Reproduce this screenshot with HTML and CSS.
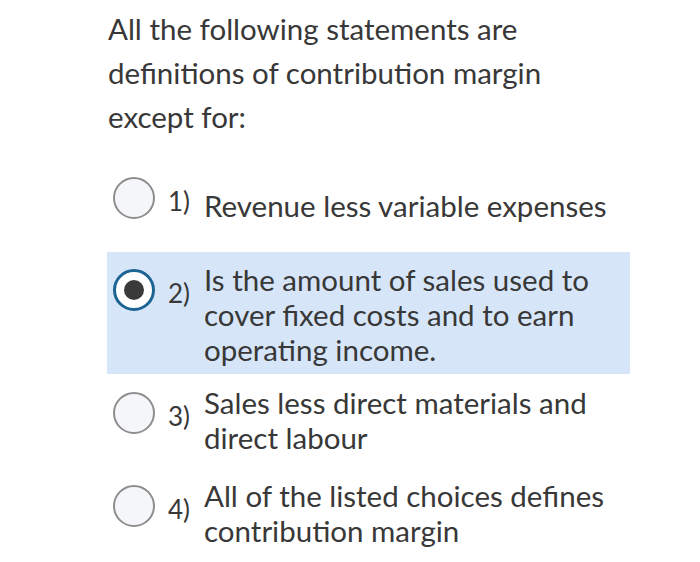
FILE: index.html
```html
<!DOCTYPE html>
<html lang="en">
<head>
<meta charset="utf-8">
<title>Question</title>
<link rel="stylesheet" href="styles.css">
</head>
<body>
<div class="page">
  <p class="question">All the following statements are definitions of contribution margin except for:</p>
  <div class="options">
    <div class="option option--first option--single">
      <span class="radio"></span>
      <span class="num">1)</span>
      <span class="text">Revenue less variable expenses</span>
    </div>
    <div class="option option--second option--selected">
      <span class="radio"><span class="dot"></span></span>
      <span class="num">2)</span>
      <span class="text">Is the amount of sales used to cover fixed costs and to earn operating income.</span>
    </div>
    <div class="option option--third">
      <span class="radio"></span>
      <span class="num">3)</span>
      <span class="text">Sales less direct materials and direct labour</span>
    </div>
    <div class="option option--fourth">
      <span class="radio"></span>
      <span class="num">4)</span>
      <span class="text">All of the listed choices defines contribution margin</span>
    </div>
  </div>
</div>
</body>
</html>
```
FILE: styles.css
```css
html, body {
  margin: 0;
  padding: 0;
  background: #ffffff;
}

.page {
  padding: 7px 0 0 107px;
  font-family: Lato, "Open Sans", sans-serif;
  color: #383838;
}

.question {
  margin: 0 0 0 1px;
  width: 440px;
  font-size: 29.5px;
  line-height: 44px;
}

.options {
  display: flex;
  flex-direction: column;
  width: 523px;
  margin-top: 21px;
}

.option {
  display: flex;
  align-items: flex-start;
  padding: 10px 14px 7px 6px;
}

.option--second { margin-top: 22px; }
.option--third { margin-top: 1px; }
.option--fourth { margin-top: 6px; }

.option--selected {
  background: #d6e6f8;
}

.radio {
  flex: 0 0 auto;
  box-sizing: border-box;
  width: 42px;
  height: 42px;
  margin-top: 7px;
  border: 2px solid #8e8e8e;
  border-radius: 50%;
  background: #f5f6fa;
  display: flex;
  align-items: center;
  justify-content: center;
}

.option--selected .radio {
  border: 3px solid #1d6494;
  background: #ffffff;
}

.dot {
  width: 20px;
  height: 20px;
  border-radius: 50%;
  background: #3a3a3a;
}

.num {
  flex: 0 0 36px;
  margin-left: 13px;
  margin-top: 14px;
  font-size: 26px;
  line-height: 35px;
}

.text {
  flex: 1 1 auto;
  font-size: 29.5px;
  line-height: 35px;
}

.option--single .text {
  padding-top: 18px;
}
```
